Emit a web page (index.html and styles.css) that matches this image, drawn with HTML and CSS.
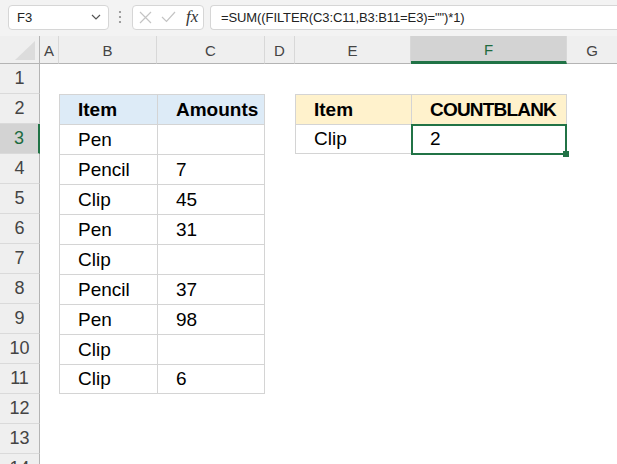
FILE: index.html
```html
<!DOCTYPE html>
<html lang="en">
<head>
    <meta charset="utf-8">
    <link rel="stylesheet" href="styles.css">
</head>
<body>
    <div class="formula-bar">
        <div class="name-box">
            <span>F3</span>
            <svg class="chevron" width="10" height="6" viewBox="0 0 10 6"><path d="M1 1 L5 5 L9 1" fill="none" stroke="#555" stroke-width="1.2"/></svg>
        </div>
        <svg class="grip" width="4" height="14" viewBox="0 0 4 14">
            <circle cx="2" cy="2" r="1.1" fill="#8a8a8a"/>
            <circle cx="2" cy="7" r="1.1" fill="#8a8a8a"/>
            <circle cx="2" cy="12" r="1.1" fill="#8a8a8a"/>
        </svg>
        <div class="fx-box">
            <svg width="13" height="13" viewBox="0 0 13 13"><path d="M1 1 L12 12 M12 1 L1 12" stroke="#c4c4c4" stroke-width="1.2"/></svg>
            <svg width="15" height="12" viewBox="0 0 15 12"><path d="M1 6 L5.5 10.5 L14 1" fill="none" stroke="#c4c4c4" stroke-width="1.2"/></svg>
            <span class="fx">fx</span>
        </div>
        <div class="formula">=SUM((FILTER(C3:C11,B3:B11=E3)="")*1)</div>
    </div>

    <div class="sheet">
        <!-- column headers -->
        <div class="corner"><span class="corner-mark"></span></div>
        <div class="col-head">A</div>
        <div class="col-head">B</div>
        <div class="col-head">C</div>
        <div class="col-head">D</div>
        <div class="col-head">E</div>
        <div class="col-head active">F</div>
        <div class="col-head last">G</div>

        <!-- row 1 -->
        <div class="row-head">1</div>
        <div></div><div></div><div></div><div></div><div></div><div></div><div></div>

        <!-- row 2 -->
        <div class="row-head">2</div>
        <div></div>
        <div class="cell head-blue">Item</div>
        <div class="cell head-blue end">Amounts</div>
        <div></div>
        <div class="cell head-yellow">Item</div>
        <div class="cell head-yellow end tight">COUNTBLANK</div>
        <div></div>

        <!-- row 3 -->
        <div class="row-head active">3</div>
        <div></div>
        <div class="cell">Pen</div>
        <div class="cell end"></div>
        <div></div>
        <div class="cell bottom">Clip</div>
        <div class="cell end bottom selected">2</div>
        <div></div>

        <!-- row 4 -->
        <div class="row-head">4</div>
        <div></div>
        <div class="cell">Pencil</div>
        <div class="cell end">7</div>
        <div></div><div></div><div></div><div></div>

        <!-- row 5 -->
        <div class="row-head">5</div>
        <div></div>
        <div class="cell">Clip</div>
        <div class="cell end">45</div>
        <div></div><div></div><div></div><div></div>

        <!-- row 6 -->
        <div class="row-head">6</div>
        <div></div>
        <div class="cell">Pen</div>
        <div class="cell end">31</div>
        <div></div><div></div><div></div><div></div>

        <!-- row 7 -->
        <div class="row-head">7</div>
        <div></div>
        <div class="cell">Clip</div>
        <div class="cell end"></div>
        <div></div><div></div><div></div><div></div>

        <!-- row 8 -->
        <div class="row-head">8</div>
        <div></div>
        <div class="cell">Pencil</div>
        <div class="cell end">37</div>
        <div></div><div></div><div></div><div></div>

        <!-- row 9 -->
        <div class="row-head">9</div>
        <div></div>
        <div class="cell">Pen</div>
        <div class="cell end">98</div>
        <div></div><div></div><div></div><div></div>

        <!-- row 10 -->
        <div class="row-head">10</div>
        <div></div>
        <div class="cell">Clip</div>
        <div class="cell end"></div>
        <div></div><div></div><div></div><div></div>

        <!-- row 11 -->
        <div class="row-head">11</div>
        <div></div>
        <div class="cell bottom">Clip</div>
        <div class="cell end bottom">6</div>
        <div></div><div></div><div></div><div></div>

        <!-- rows 12-14 -->
        <div class="row-head">12</div>
        <div></div><div></div><div></div><div></div><div></div><div></div><div></div>
        <div class="row-head">13</div>
        <div></div><div></div><div></div><div></div><div></div><div></div><div></div>
        <div class="row-head">14</div>
        <div></div><div></div><div></div><div></div><div></div><div></div><div></div>
    </div>
</body>
</html>
```

FILE: styles.css
```css
* {
    box-sizing: border-box;
}
body {
    margin: 0;
    padding: 0;
    width: 617px;
    height: 464px;
    overflow: hidden;
    background-color: #fff;
    font-family: "Liberation Sans", Arial, sans-serif;
}

/* formula bar */
.formula-bar {
    display: flex;
    align-items: center;
    height: 36px;
    padding: 3px 0 5px 8px;
    background-color: #f3f3f3;
}
.name-box {
    display: flex;
    align-items: center;
    justify-content: space-between;
    width: 101px;
    height: 25px;
    padding: 0 7px 0 8px;
    background: #fff;
    border: 1px solid #d6d6d6;
    border-radius: 4px;
    font-size: 13px;
    color: #222;
}
.grip {
    margin: 0 10px 0 9px;
}
.fx-box {
    display: flex;
    align-items: center;
    gap: 9px;
    width: 72px;
    height: 25px;
    padding: 0 0 0 6px;
    background: #fff;
    border: 1px solid #d6d6d6;
    border-radius: 4px;
}
.fx {
    font-family: "Liberation Serif", serif;
    font-style: italic;
    font-size: 17px;
    color: #333;
    margin-left: 1px;
}
.formula {
    flex: 1;
    height: 25px;
    margin-left: 6px;
    padding: 0 0 0 10px;
    line-height: 23px;
    background: #fff;
    border: 1px solid #d6d6d6;
    border-right: none;
    border-radius: 4px 0 0 4px;
    font-size: 13px;
    letter-spacing: -0.1px;
    color: #222;
    white-space: nowrap;
}

/* sheet grid */
.sheet {
    display: grid;
    grid-template-columns: 40px 19px 98px 108px 30px 116px 156px 1fr;
    grid-template-rows: 28px repeat(14, 30px);
}
.corner {
    position: relative;
    background: #efefef;
    border-right: 1px solid #b4b4b4;
    border-bottom: 1px solid #b4b4b4;
}
.corner-mark {
    position: absolute;
    right: 4px;
    bottom: 3px;
    width: 0;
    height: 0;
    border-left: 20px solid transparent;
    border-bottom: 19px solid #dcdcdc;
}
.col-head {
    display: flex;
    align-items: center;
    justify-content: center;
    background: #efefef;
    border-right: 1px solid #d8d8d8;
    border-bottom: 1px solid #b4b4b4;
    font-size: 15px;
    color: #444;
    padding-top: 2px;
}
.col-head.last {
    border-right: none;
}
.col-head.active {
    background: #d3d3d3;
    color: #1e6b3f;
    border-bottom: 3px solid #217346;
}
.row-head {
    display: flex;
    align-items: center;
    justify-content: center;
    background: #efefef;
    border-right: 1px solid #b4b4b4;
    border-bottom: 1px solid #dadada;
    font-size: 18px;
    color: #444;
}
.row-head.active {
    background: #d3d3d3;
    color: #1e6b3f;
    border-right: 2px solid #217346;
}

/* data cells */
.cell {
    display: flex;
    align-items: center;
    padding-left: 18px;
    border-top: 1px solid #d4d4d4;
    border-left: 1px solid #d4d4d4;
    font-size: 19px;
    color: #000;
    white-space: nowrap;
}
.cell.end {
    border-right: 1px solid #d4d4d4;
}
.cell.bottom {
    border-bottom: 1px solid #d4d4d4;
}
.cell.tight {
    letter-spacing: -0.8px;
}
.head-blue {
    background: #ddebf7;
    font-weight: bold;
}
.head-yellow {
    background: #fff2cc;
    font-weight: bold;
}
.selected {
    position: relative;
}
.selected::after {
    content: "";
    position: absolute;
    top: -1px;
    left: -1px;
    right: -1px;
    bottom: -2px;
    border: 2px solid #217346;
}
.selected::before {
    content: "";
    position: absolute;
    right: -3px;
    bottom: -4px;
    width: 6px;
    height: 6px;
    background: #217346;
    z-index: 1;
}
```
